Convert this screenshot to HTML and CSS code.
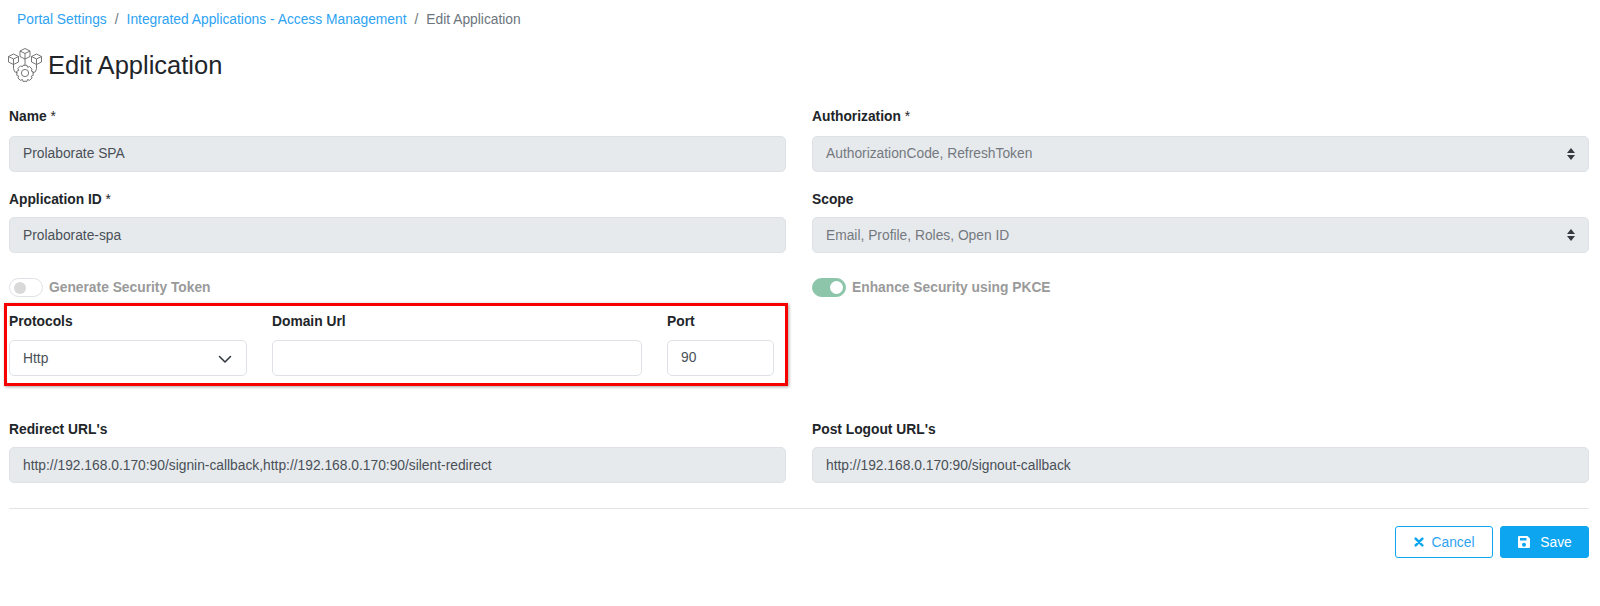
FILE: index.html
```html
<!DOCTYPE html>
<html lang="en">
<head>
<meta charset="utf-8">
<title>Edit Application</title>
<link rel="stylesheet" href="styles.css">
</head>
<body>
<nav class="crumbs">
  <a class="crumb-link">Portal Settings</a><span class="crumb-sep">/</span>
  <a class="crumb-link">Integrated Applications - Access Management</a><span class="crumb-sep">/</span>
  <span class="crumb-current">Edit Application</span>
</nav>
<h1 class="title">
  <svg class="title-icon" viewBox="0 0 34 34" fill="none" stroke="#666" stroke-width=".9">
    <path d="M17 .5l5 2.500v5.500l-5 2.500-5-2.500V3zM12 3l5 2.500L22 3M17 5.500V11"/>
    <path d="M5.500 6l5 2.500V14l-5 2.500-5-2.500V8.500zM.5 8.500l5 2.500 5-2.500M5.500 11v5.500"/>
    <path d="M28.500 6l5 2.500V14l-5 2.500-5-2.500V8.500zM23.500 8.500l5 2.500 5-2.500M28.500 11v5.500"/>
    <path d="M17 11v6M5.500 16.500v4q0 4 4 4.500M28.500 16.500v4q0 4-4 4.500"/>
    <g transform="translate(-1 -3.200)">
      <path d="M16 20.500h4l.6 2 1.900-.8 2.600 2.600-.9 1.900 2 .8v3.600l-2 .8.900 1.900-2.600 2.200-1.900-.8-.6 1.800h-4l-.6-1.800-1.900.8-2.600-2.200.9-1.900-2-.8V26.400l2-.8-.9-1.900 2.600-2.600 1.900.8z"/>
      <circle cx="18" cy="28.200" r="3.600"/>
    </g>
  </svg>
  <span class="title-text">Edit Application</span>
</h1>
<form class="form">
  <div class="grid row-one">
    <div>
      <div class="label"><b>Name</b> *</div>
      <div class="control disabled">Prolaborate SPA</div>
    </div>
    <div>
      <div class="label"><b>Authorization</b> *</div>
      <div class="control disabled muted">AuthorizationCode, RefreshToken
        <svg class="updown" viewBox="0 0 10 14" fill="#343a40"><path d="M5 1l4 5H1zM5 13L1 8h8z"/></svg>
      </div>
    </div>
  </div>
  <div class="grid row-two">
    <div>
      <div class="label"><b>Application ID</b> *</div>
      <div class="control disabled">Prolaborate-spa</div>
    </div>
    <div>
      <div class="label"><b>Scope</b></div>
      <div class="control disabled muted">Email, Profile, Roles, Open ID
        <svg class="updown" viewBox="0 0 10 14" fill="#343a40"><path d="M5 1l4 5H1zM5 13L1 8h8z"/></svg>
      </div>
    </div>
  </div>
  <div class="grid">
    <div class="switch-row">
      <span class="switch"><span class="knob"></span></span>
      <span class="switch-label">Generate Security Token</span>
    </div>
    <div class="switch-row">
      <span class="switch on"><span class="knob"></span></span>
      <span class="switch-label">Enhance Security using PKCE</span>
    </div>
  </div>
  <div class="highlight">
    <div class="protocol">
      <div class="label"><b>Protocols</b></div>
      <div class="control">Http
        <svg class="chev" viewBox="0 0 16 16" fill="none" stroke="#343a40" stroke-width="1.600" stroke-linecap="round" stroke-linejoin="round"><path d="M2.500 5.500L8 11l5.500-5.500"/></svg>
      </div>
    </div>
    <div class="domain">
      <div class="label"><b>Domain Url</b></div>
      <div class="control"></div>
    </div>
    <div class="port">
      <div class="label"><b>Port</b></div>
      <div class="control port-value">90</div>
    </div>
  </div>
  <div class="grid urls">
    <div>
      <div class="label"><b>Redirect URL's</b></div>
      <div class="control disabled">http://192.168.0.170:90/signin-callback,http://192.168.0.170:90/silent-redirect</div>
    </div>
    <div>
      <div class="label"><b>Post Logout URL's</b></div>
      <div class="control disabled">http://192.168.0.170:90/signout-callback</div>
    </div>
  </div>
  <hr class="rule">
  <div class="actions">
    <button type="button" class="btn btn-outline">
      <svg class="btn-icon" viewBox="0 0 12 12" stroke="#0ea5f0" stroke-width="3" stroke-linecap="round"><path d="M2 2l8 8M10 2l-8 8"/></svg>
      Cancel
    </button>
    <button type="button" class="btn btn-solid">
      <svg class="save-icon" viewBox="0 0 14 14" fill="#fff"><path fill-rule="evenodd" d="M2 1h8.500L13 3.500V12a1 1 0 0 1-1 1H2a1 1 0 0 1-1-1V2a1 1 0 0 1 1-1zm1 2v2.500h6.500V3zM7 7.800a2 2 0 1 0 0 4 2 2 0 0 0 0-4z"/></svg>
      Save
    </button>
  </div>
</form>
</body>
</html>
```
FILE: styles.css
```css
* { box-sizing: border-box; }
html, body { margin: 0; padding: 0; background: #fff; }
body {
  padding: 0 11px 0 9px;
  font-family: "Liberation Sans", Arial, sans-serif;
  font-size: 13.800px;
  color: #212529;
}
.crumbs {
  display: flex;
  align-items: center;
  height: 20px;
  margin-top: 10px;
  padding-left: 8px;
  line-height: 20px;
}
.crumb-link { color: #2ea3f2; }
.crumb-sep { color: #6c757d; margin: 0 8px; }
.crumb-current { color: #6c757d; }
.title {
  display: flex;
  align-items: center;
  gap: 6px;
  height: 38px;
  margin: 16px 0 0;
  font-size: 25.500px;
  font-weight: 400;
  color: #212529;
}
.title-icon { width: 34px; height: 34px; flex: none; margin-left: -1px; }
.title-text { padding-top: 1px; }
.form { margin-top: 22px; }
.grid {
  display: grid;
  grid-template-columns: 777px 777px;
  column-gap: 26px;
}
.label {
  height: 20px;
  line-height: 22px;
  color: #212529;
}
.label b { font-weight: 700; }
.row-one { margin-bottom: 17px; }
.row-one .label { margin-bottom: 10px; }
.row-two { margin-bottom: 25px; }
.row-two .label { margin-bottom: 8px; }
.control {
  position: relative;
  display: flex;
  align-items: center;
  height: 36px;
  padding: 2px 13px 0;
  border: 1px solid #dee2e6;
  border-radius: 5px;
  background: #fff;
  color: #495057;
  line-height: 20px;
  white-space: nowrap;
}
.row-one .control, .port-value { padding-top: 0; }
.disabled { background: #e7eaed; }
.muted { color: #74797f; }
.updown { position: absolute; right: 12px; top: 10px; width: 10px; height: 14px; }
.chev { position: absolute; right: 13px; top: 10px; width: 16px; height: 16px; }
.switch-row {
  display: flex;
  align-items: center;
  gap: 6px;
  height: 19px;
}
.switch {
  display: flex;
  align-items: center;
  width: 34px;
  height: 19px;
  padding: 0 4px;
  border: 1px solid #dee2e6;
  border-radius: 10px;
  background: #fff;
}
.knob { width: 12px; height: 12px; border-radius: 50%; background: #d9d9d9; }
.switch.on {
  justify-content: flex-end;
  padding: 0 2px;
  background: #8cc5a9;
  border-color: #8cc5a9;
}
.switch.on .knob { width: 13px; height: 13px; background: #fff; }
.switch-label { font-weight: 700; color: #9a9a9a; }
.highlight {
  display: flex;
  gap: 25px;
  width: 784px;
  height: 83px;
  margin: 6px 0 0 -5px;
  padding: 5px 0 0 2px;
  border: 3px solid #f70000;
  box-shadow: 1px 1px 3px rgba(0, 0, 0, .35);
}
.highlight .label { margin-bottom: 9px; }
.protocol { width: 238px; }
.domain { width: 370px; }
.port { width: 107px; }
.urls { margin-top: 32px; }
.urls .label { margin-bottom: 9px; line-height: 23px; }
.rule { height: 1px; margin: 25px 0 0; border: 0; background: #e2e4e6; }
.actions {
  display: flex;
  justify-content: flex-end;
  gap: 7px;
  margin-top: 17px;
}
.btn {
  display: flex;
  align-items: center;
  justify-content: center;
  height: 32px;
  padding: 0;
  border-radius: 3px;
  font-family: inherit;
  font-size: inherit;
}
.btn-outline { width: 98px; gap: 8px; background: #fff; border: 1px solid #0ea5f0; color: #2ea3f2; }
.btn-solid { width: 89px; gap: 9px; background: #0ea5f0; border: 1px solid #0ea5f0; color: #fff; }
.btn-icon { width: 10px; height: 10px; flex: none; }
.save-icon { width: 14px; height: 14px; flex: none; }
```
